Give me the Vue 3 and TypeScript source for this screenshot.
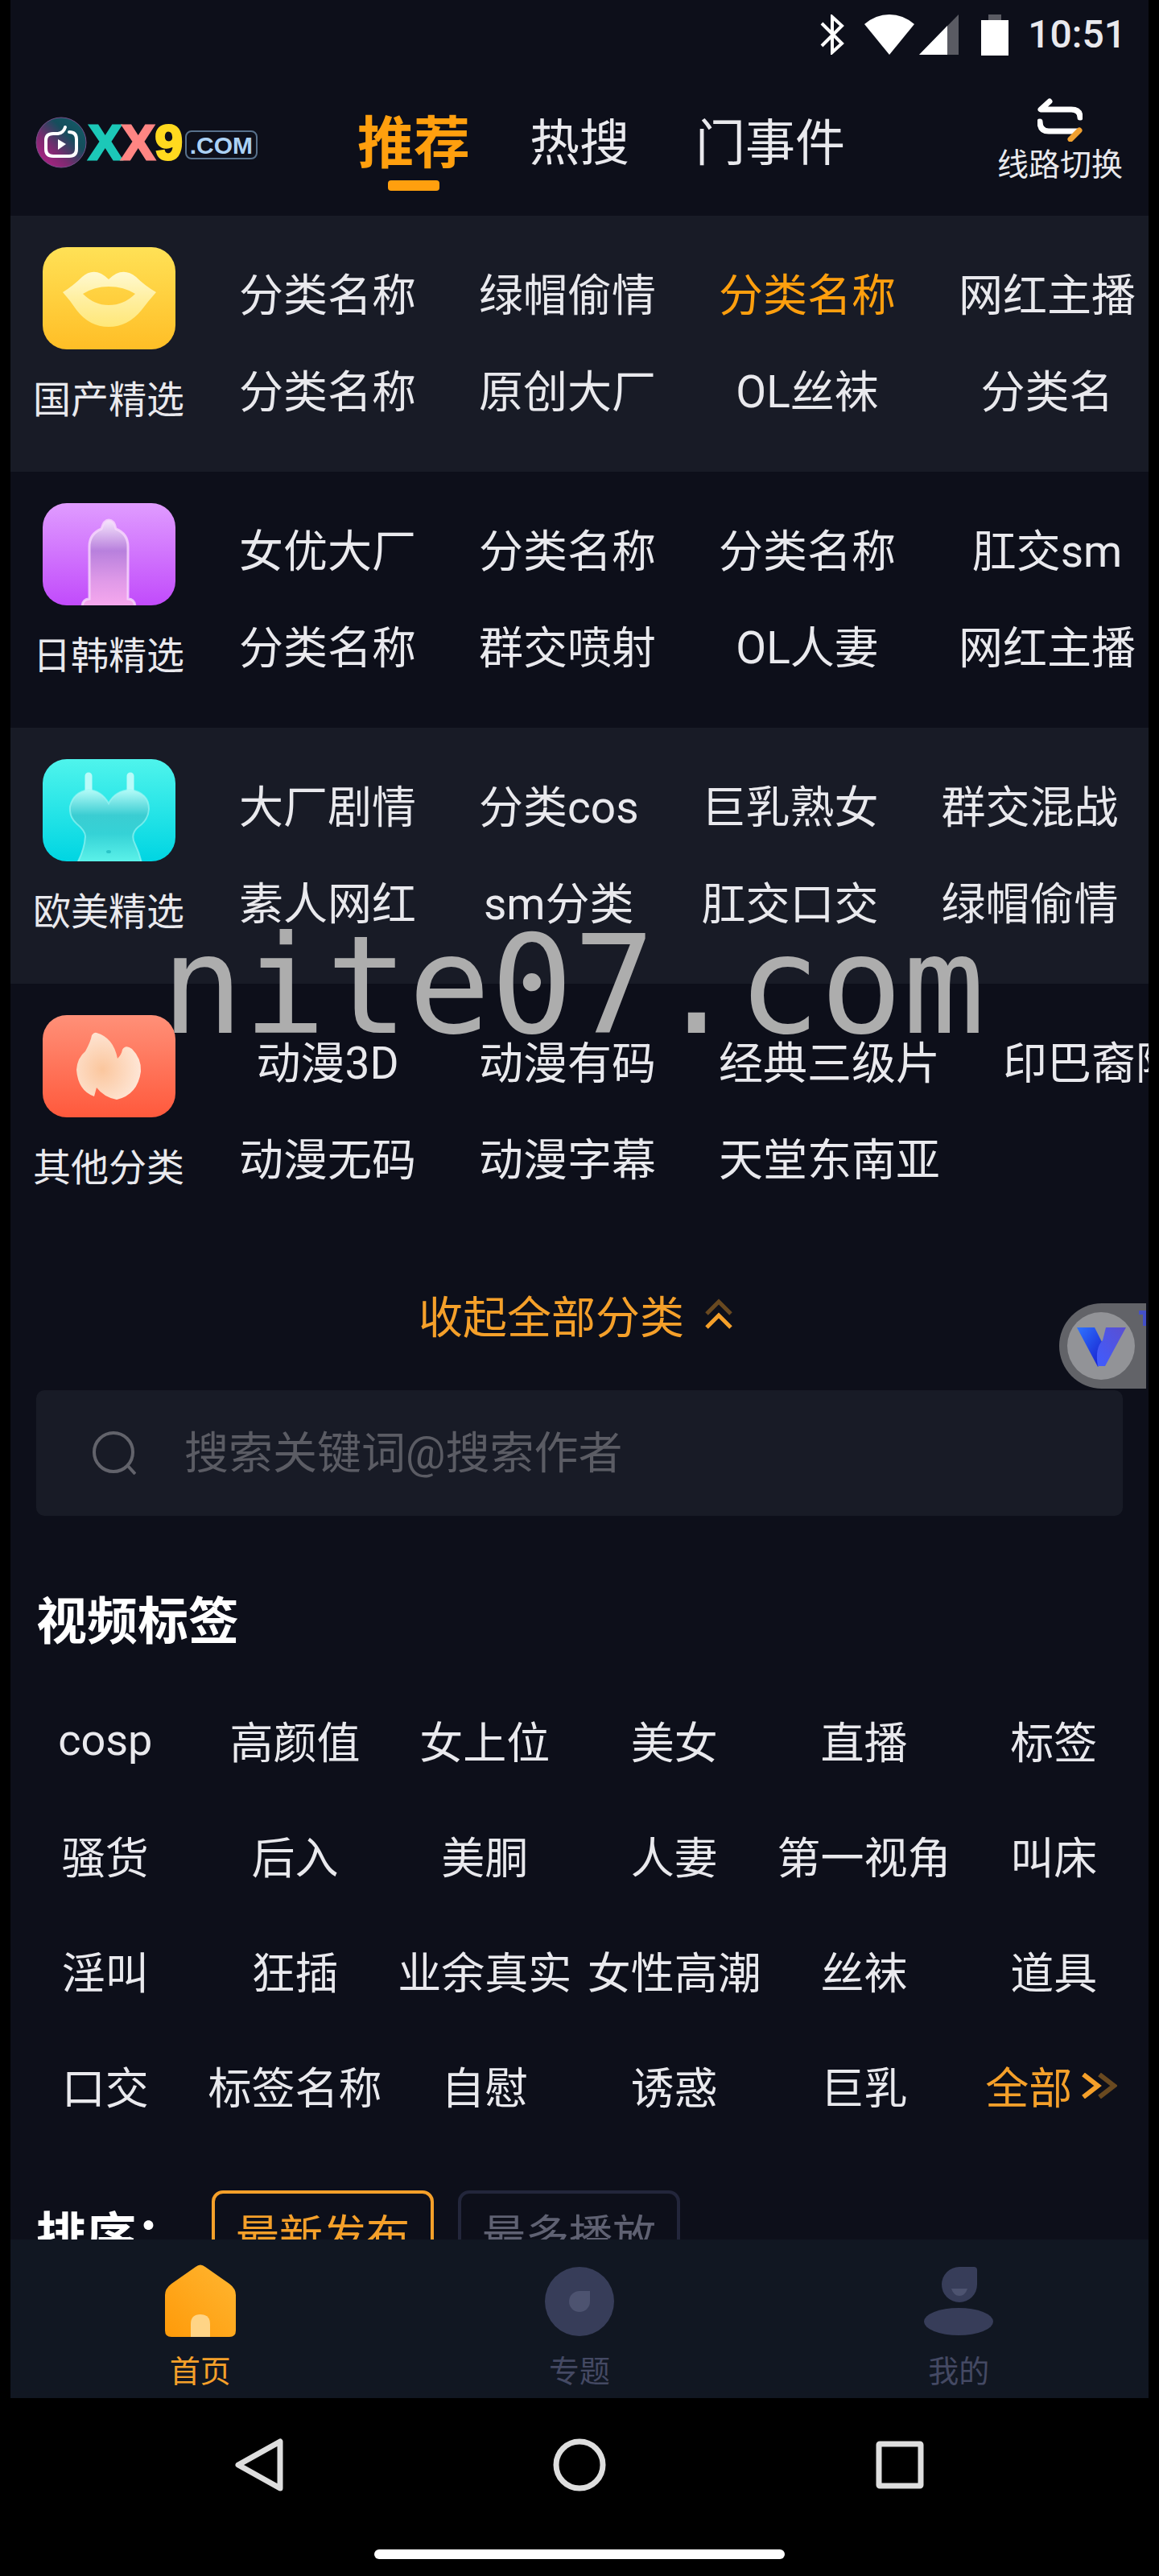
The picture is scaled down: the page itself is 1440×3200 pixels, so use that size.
<script setup lang="ts">
import { ref } from 'vue'

type IconName = 'lips' | 'purple' | 'cyan' | 'flame'

interface Section {
  title: string
  icon: IconName
  // Items run down each column first: top, bottom, top, bottom ...
  items: string[]
  hot?: number
}

const tabs: string[] = ['推荐', '热搜', '门事件']
const activeTab = ref<number>(0)

const sections: Section[] = [
  {
    title: '国产精选',
    icon: 'lips',
    items: ['分类名称', '分类名称', '绿帽偷情', '原创大厂', '分类名称', 'OL丝袜', '网红主播', '分类名'],
    hot: 4,
  },
  {
    title: '日韩精选',
    icon: 'purple',
    items: ['女优大厂', '分类名称', '分类名称', '群交喷射', '分类名称', 'OL人妻', '肛交sm', '网红主播'],
  },
  {
    title: '欧美精选',
    icon: 'cyan',
    items: ['大厂剧情', '素人网红', '分类cos', 'sm分类', '巨乳熟女', '肛交口交', '群交混战', '绿帽偷情'],
  },
  {
    title: '其他分类',
    icon: 'flame',
    items: ['动漫3D', '动漫无码', '动漫有码', '动漫字幕', '经典三级片', '天堂东南亚', '印巴裔阿'],
  },
]

const tags: string[] = [
  'cosp', '高颜值', '女上位', '美女', '直播', '标签',
  '骚货', '后入', '美胴', '人妻', '第一视角', '叫床',
  '淫叫', '狂插', '业余真实', '女性高潮', '丝袜', '道具',
  '口交', '标签名称', '自慰', '诱惑', '巨乳',
]

const sorts: string[] = ['最新发布', '最多播放']
const activeSort = ref<number>(0)
const keyword = ref<string>('')
</script>

<template>
  <div class="phone">
    <div class="screen">
      <div class="status">
        <svg class="s-bt" viewBox="0 0 30 50"><path d="M2 11 27 36 15 47V3L27 14 2 39" fill="none" stroke="#fff" stroke-width="4" /></svg>
        <svg class="s-wifi" viewBox="0 0 62 50"><path d="M31 50 0 12Q14 0 31 0T62 12Z" fill="#fff" /></svg>
        <svg class="s-signal" viewBox="0 0 49 50"><path d="M0 50 49 0V50Z" fill="#5a5b63" /><path d="M0 50 35 14V50Z" fill="#fff" /></svg>
        <svg class="s-battery" viewBox="0 0 34 51"><path d="M9 0H25V7H9Z" fill="#5a5b63" /><path d="M0 7H34V51H0Z" fill="#fff" /></svg>
        <span class="clock">10:51</span>
      </div>

      <header class="header">
        <a class="logo" href="#">
          <svg class="logo-mark" viewBox="0 0 64 64">
            <defs>
              <linearGradient id="ring" x1="0" y1="1" x2="1" y2="0">
                <stop offset="0" stop-color="#c01f8b" /><stop offset=".35" stop-color="#7c2a70" />
                <stop offset=".65" stop-color="#154d5c" /><stop offset="1" stop-color="#12606a" />
              </linearGradient>
            </defs>
            <circle cx="32" cy="32" r="31" fill="url(#ring)" stroke="#75508a" stroke-width="1" />
            <path d="M42 19Q51 19 51 28V40Q51 49 42 49H22Q13 49 13 40V29Q13 21 22 21H28Q35 20 37 13" fill="none" stroke="#fff" stroke-width="4" stroke-linecap="round" />
            <path d="M28 28 38 34 28 41Z" fill="#fff" />
          </svg>
          <span class="glyph teal">X</span><span class="glyph coral">X</span><span class="glyph gold">9</span>
          <span class="dotcom">.COM</span>
        </a>
        <nav class="tabs">
          <button v-for="(tab, i) in tabs" :key="tab" type="button" class="tab" :class="{ active: i === activeTab }" @click="activeTab = i">{{ tab }}</button>
        </nav>
        <button class="route" type="button">
          <svg class="route-icon" viewBox="0 0 56 54" fill="none" stroke-width="7" stroke-linecap="round" stroke-linejoin="round">
            <path d="M15 4 4 14H42Q53 14 53 24M3 29Q3 41 14 41H50" stroke="#fff" />
            <path d="M52 40 41 51" stroke="#f0a030" />
          </svg>
          线路切换
        </button>
      </header>

      <main>
        <section v-for="s in sections" :key="s.title" class="group">
          <a class="group-head" href="#">
            <svg class="group-icon" viewBox="0 0 165 127">
              <defs>
                <linearGradient id="g-lips" x1="0" y1="0" x2="0" y2="1"><stop offset="0" stop-color="#ffe156" /><stop offset="1" stop-color="#ffbe26" /></linearGradient>
                <linearGradient id="g-purple" x1="0" y1="0" x2="0" y2="1"><stop offset="0" stop-color="#e09cff" /><stop offset="1" stop-color="#c14bfb" /></linearGradient>
                <linearGradient id="g-cyan" x1="0" y1="0" x2="0" y2="1"><stop offset="0" stop-color="#4ff4ec" /><stop offset="1" stop-color="#00d5e2" /></linearGradient>
                <linearGradient id="g-flame" x1="0" y1="0" x2="0" y2="1"><stop offset="0" stop-color="#ff9078" /><stop offset="1" stop-color="#ff593c" /></linearGradient>
                <linearGradient id="f-lips" x1="0" y1="0" x2="0" y2="1"><stop offset="0" stop-color="#fff9d0" /><stop offset=".5" stop-color="#ffefa0" /><stop offset="1" stop-color="#ffe778" /></linearGradient>
                <linearGradient id="f-purple" x1="0" y1="0" x2="0" y2="1"><stop offset="0" stop-color="#f6e6fc" /><stop offset=".35" stop-color="#b880dd" /><stop offset=".7" stop-color="#e09ae8" /><stop offset="1" stop-color="#f8a9ee" /></linearGradient>
                <linearGradient id="f-cyan" x1="0" y1="0" x2="0" y2="1"><stop offset="0" stop-color="#b4fbf8" /><stop offset=".35" stop-color="#3acdd2" /><stop offset=".6" stop-color="#35d2d6" /><stop offset="1" stop-color="#5df3ea" /></linearGradient>
                <radialGradient id="f-flame" cx=".4" cy=".55" r=".6"><stop offset="0" stop-color="#fbc69d" /><stop offset="1" stop-color="#fee6d6" /></radialGradient>
              </defs>
              <rect width="165" height="127" rx="30" :fill="`url(#g-${s.icon})`" />
              <path v-if="s.icon === 'lips'" fill="url(#f-lips)" fill-rule="evenodd" d="M25 56Q38 48 49 37Q65 23 82 40Q99 23 116 37Q127 48 141 56Q132 66 123 78Q106 99 82 99Q58 99 42 78Q34 66 25 56ZM50 58Q64 72 82 72Q101 72 115 58Q101 49 82 49Q64 49 50 58Z" />
              <path v-else-if="s.icon === 'purple'" fill="url(#f-purple)" stroke="#f8d8fc" stroke-opacity=".8" stroke-width="3" d="M49 130Q49 119 58 119V54Q58 38 73 32Q76 21 82 21Q89 21 91 32Q106 38 106 54V119Q115 119 115 130Z" />
              <g v-else-if="s.icon === 'cyan'">
                <path d="M57 21V45M109 21V45" stroke="#b8fbf9" stroke-width="9" stroke-linecap="round" />
                <path fill="url(#f-cyan)" stroke="#a5f8f5" stroke-opacity=".6" stroke-width="2" d="M82 55Q90 39 109 38Q132 42 132 62Q131 76 119 84Q108 93 115 106Q120 116 123 129H43Q52 112 53 96Q53 89 42 80Q33 72 34 59Q38 41 57 38Q73 39 82 55Z" />
                <ellipse cx="82" cy="115" rx="3" ry="2" fill="#2bc5c8" />
              </g>
              <path v-else fill="url(#f-flame)" d="M67 22Q88 28 93 54Q98 49 99 43Q103 36 111 42Q123 54 122 70Q118 99 92 105Q76 102 67 90L64 101Q44 94 42 68Q43 53 53 45Q60 32 61 25Q64 21 67 22Z" />
            </svg>
            <span class="group-title">{{ s.title }}</span>
          </a>
          <div class="chips">
            <a v-for="(item, i) in s.items" :key="i" href="#" class="chip" :class="{ hot: i === s.hot }">{{ item }}</a>
          </div>
        </section>

        <button class="collapse" type="button">
          收起全部分类
          <svg class="collapse-icon" viewBox="0 0 34 38" fill="none" stroke="#f5a02a" stroke-width="5">
            <path d="M2 19 17 4 32 19" opacity=".4" /><path d="M2 36 17 21 32 36" />
          </svg>
        </button>

        <label class="search">
          <svg class="search-icon" viewBox="0 0 54 54" fill="none" stroke="#62636b" stroke-width="4"><circle cx="26" cy="26" r="24" /><path d="M43 42 53 53" /></svg>
          <input v-model="keyword" type="text" placeholder="搜索关键词@搜索作者" aria-label="搜索" />
        </label>

        <h2 class="heading">视频标签</h2>
        <div class="tags">
          <a v-for="(tag, i) in tags" :key="i" href="#" class="tag">{{ tag }}</a>
          <a href="#" class="tag all">
            全部
            <svg class="all-icon" viewBox="0 0 44 32" fill="none" stroke="#f5a02a" stroke-width="6"><path d="M2 2 20 16 2 30" /><path d="M22 2 40 16 22 30" opacity=".4" /></svg>
          </a>
        </div>

        <div class="sort">
          <span class="sort-label">排序：</span>
          <button v-for="(item, i) in sorts" :key="item" type="button" class="sort-item" :class="{ active: i === activeSort }" @click="activeSort = i">{{ item }}</button>
        </div>
      </main>

      <nav class="dock">
        <a href="#" class="dock-item active">
          <svg class="dock-icon" viewBox="0 0 92 92">
            <defs><linearGradient id="home" x1="0" y1="1" x2="1" y2="0"><stop offset="0" stop-color="#ff9a09" /><stop offset="1" stop-color="#ffb631" /></linearGradient></defs>
            <path d="M40 3Q46-2 52 3L82 24Q90 30 90 38V82Q90 90 82 90H10Q2 90 2 82V38Q2 30 10 24Z" fill="url(#home)" />
            <path d="M34 90V74Q34 62 46 62T58 74V90Z" fill="#ffd486" />
          </svg>
          首页
        </a>
        <a href="#" class="dock-item">
          <svg class="dock-icon" viewBox="0 0 92 92"><circle cx="46" cy="46" r="43" fill="#373d59" /><path d="M46 33H59V46A13 13 0 1 1 46 33Z" fill="#4d5370" /></svg>
          专题
        </a>
        <a href="#" class="dock-item">
          <svg class="dock-icon" viewBox="0 0 92 92"><path d="M47 3H65Q69 3 69 7V25A22 22 0 1 1 47 3Z" fill="#373d59" /><path d="M37 30H57Q54 39 47 39T37 30Z" fill="#4d5370" /><ellipse cx="46" cy="71" rx="43" ry="17" fill="#373d59" /></svg>
          我的
        </a>
      </nav>

      <button class="floater" type="button" aria-label="V">
        <svg viewBox="0 0 108 106">
          <defs>
            <linearGradient id="v1" x1="0" y1="0" x2="1" y2="1"><stop offset="0" stop-color="#2f74ff" /><stop offset="1" stop-color="#1414c8" /></linearGradient>
            <linearGradient id="v2" x1="1" y1="0" x2="0" y2="1"><stop offset="0" stop-color="#5b4fd0" /><stop offset="1" stop-color="#3f5cff" /></linearGradient>
          </defs>
          <path d="M108 0H53A53 53 0 0 0 53 106H108Z" fill="#626368" />
          <circle cx="52" cy="53" r="42" fill="#929397" />
          <path d="M22 30H44L60 62 48 79Z" fill="url(#v1)" />
          <path d="M58 30H83L57 78H48Q44 56 54 46Z" fill="url(#v2)" />
          <path d="M99 9H108V28H104V14H99Z" fill="#4450c8" />
        </svg>
      </button>
      <div class="watermark">nite07.com</div>
    </div>

    <div class="system">
      <div class="keys">
        <svg class="key" viewBox="0 0 68 68"><path d="M60 5V63L8 34Z" /></svg>
        <svg class="key" viewBox="0 0 68 68"><circle cx="34" cy="34" r="29" /></svg>
        <svg class="key" viewBox="0 0 68 68"><rect x="8" y="8" width="52" height="52" rx="1" /></svg>
      </div>
      <div class="handle"></div>
    </div>
  </div>
</template>

<style>
body {
  margin: 0;
  background: #000;
}
</style>

<style scoped>
.phone {
  padding: 0 13px;
  background: #000;
  color: #e9e9ed;
  font-family: Roboto, "Noto Sans CJK SC", sans-serif;
}
.phone * {
  box-sizing: border-box;
}
svg {
  display: block;
  flex: none;
}
a {
  color: inherit;
  text-decoration: none;
}
button {
  padding: 0;
  border: 0;
  background: none;
  color: inherit;
  font: inherit;
}
.screen {
  position: relative;
  overflow: hidden;
  background: #0d0f1a;
}
.status {
  display: flex;
  align-items: center;
  justify-content: flex-end;
  height: 86px;
  padding-right: 28px;
}
.s-bt { width: 30px; height: 50px; }
.s-wifi { width: 62px; height: 50px; margin-left: 25px; }
.s-signal { width: 49px; height: 50px; margin-left: 6px; }
.s-battery { width: 34px; height: 51px; margin-left: 28px; }
.clock {
  margin-left: 24px;
  font-size: 48px;
  font-weight: 500;
  line-height: 56px;
}
.header {
  display: flex;
  align-items: center;
  height: 182px;
  padding: 0 32px 0 31px;
}
.logo {
  display: flex;
  align-items: center;
  width: 276px;
}
.logo-mark {
  width: 64px;
  height: 64px;
  margin-right: 2px;
}
.glyph {
  width: 41px;
  font-family: "Liberation Sans", sans-serif;
  font-size: 62px;
  font-weight: 700;
  line-height: 64px;
  text-align: center;
  -webkit-text-stroke: 3px currentColor;
}
.teal { color: #1cc8b8; }
.coral { color: #ff8583; }
.gold { width: 36px; color: #ffd91f; }
.dotcom {
  height: 36px;
  margin: 6px 0 0 2px;
  padding: 0 4px;
  border: 2px solid #58718c;
  border-radius: 8px;
  color: #acd2f5;
  font-family: "Liberation Sans", sans-serif;
  font-size: 30px;
  font-weight: 700;
  line-height: 34px;
}
.tabs {
  display: flex;
  flex: 1;
  gap: 82px;
  padding-top: 4px;
  padding-left: 132px;
}
.tab {
  position: relative;
  display: flex;
  justify-content: center;
  min-width: 124px;
  font-size: 62px;
  line-height: 80px;
  white-space: nowrap;
}
.tab.active {
  width: 124px;
  color: #ff9f0e;
  font-size: 70px;
  font-weight: 700;
}
.tab.active::after {
  position: absolute;
  bottom: -18px;
  left: 30px;
  width: 64px;
  height: 13px;
  border-radius: 4px;
  background: #ff9f0e;
  content: "";
}
.route {
  display: flex;
  flex-direction: column;
  gap: 2px;
  align-items: center;
  font-size: 39px;
  line-height: 54px;
}
.route-icon {
  width: 56px;
  height: 54px;
}
.group {
  display: flex;
  height: 318px;
}
.group:nth-of-type(odd) {
  background: #181b26;
}
.group-head {
  display: flex;
  flex: none;
  flex-direction: column;
  align-items: center;
  width: 244px;
  padding-top: 39px;
}
.group-icon {
  width: 165px;
  height: 127px;
}
.group-title {
  margin-top: 33px;
  font-size: 47px;
  line-height: 60px;
}
.chips {
  display: grid;
  flex: 1;
  grid-auto-flow: column;
  grid-template-rows: 60px 60px;
  gap: 60px 78px;
  justify-content: start;
  min-width: 0;
  margin-left: 40px;
  padding-top: 69px;
  overflow: hidden;
}
.chip {
  font-size: 55px;
  line-height: 60px;
  text-align: center;
  white-space: nowrap;
}
.hot {
  color: #ff9f0e;
}
.collapse {
  display: flex;
  align-items: center;
  justify-content: center;
  gap: 26px;
  width: 100%;
  height: 187px;
  padding: 0 10px 4px 0;
  color: #f5a02a;
  font-size: 55px;
}
.collapse-icon {
  width: 34px;
  height: 38px;
}
.search {
  display: flex;
  align-items: center;
  gap: 60px;
  height: 156px;
  margin: 0 32px;
  padding: 0 70px;
  border-radius: 10px;
  background: #181b26;
}
.search-icon {
  width: 54px;
  height: 54px;
}
.search input {
  flex: 1;
  min-width: 0;
  height: 80px;
  padding: 0;
  border: 0;
  outline: 0;
  background: none;
  color: #e9e9ed;
  font: inherit;
  font-size: 55px;
}
.search input::placeholder {
  color: #5b5c64;
}
.heading {
  margin: 92px 32px 35px;
  color: #fff;
  font-size: 63px;
  font-weight: 700;
  line-height: 80px;
}
.tags {
  display: grid;
  grid-template-columns: repeat(6, minmax(0, 1fr));
  grid-auto-rows: 143px;
}
.tag {
  display: flex;
  align-items: center;
  justify-content: center;
  font-size: 54px;
  white-space: nowrap;
}
.all {
  gap: 12px;
  padding-right: 6px;
  color: #f5a02a;
}
.all-icon {
  width: 44px;
  height: 32px;
}
.sort {
  display: flex;
  gap: 30px;
  height: 61px;
  margin-top: 59px;
  padding-left: 32px;
  overflow: hidden;
}
.sort-label {
  width: 188px;
  color: #fff;
  font-size: 62px;
  font-weight: 700;
  line-height: 116px;
  white-space: nowrap;
}
.sort-item {
  height: 116px;
  padding: 0 26px;
  border: 4px solid #23263b;
  border-radius: 14px;
  color: #5f6172;
  font-size: 54px;
  line-height: 108px;
}
.sort-item.active {
  border-color: #f5a02a;
  color: #f5a02a;
}
.dock {
  display: flex;
  height: 197px;
  background: #111722;
}
.dock-item {
  display: flex;
  flex: 1;
  flex-direction: column;
  align-items: center;
  gap: 16px;
  padding-top: 31px;
  color: #444963;
  font-size: 38px;
  line-height: 50px;
}
.dock-item.active {
  color: #f5a02a;
}
.dock-icon {
  width: 92px;
  height: 92px;
}
.floater {
  position: absolute;
  top: 1619px;
  right: 3px;
  width: 108px;
  height: 106px;
}
.watermark {
  position: absolute;
  top: 1124px;
  right: 16px;
  left: 0;
  color: #adadad;
  font-family: "DejaVu Sans Mono", monospace;
  font-size: 170px;
  line-height: 200px;
  text-align: center;
}
.system {
  display: flex;
  flex-direction: column;
  align-items: center;
  padding: 49px 0 21px;
}
.keys {
  display: flex;
  justify-content: center;
  gap: 330px;
}
.key {
  width: 68px;
  height: 68px;
  fill: none;
  stroke: #dedede;
  stroke-width: 7px;
  stroke-linejoin: round;
}
.handle {
  width: 36%;
  height: 12px;
  margin-top: 71px;
  border-radius: 6px;
  background: #fff;
}
</style>
